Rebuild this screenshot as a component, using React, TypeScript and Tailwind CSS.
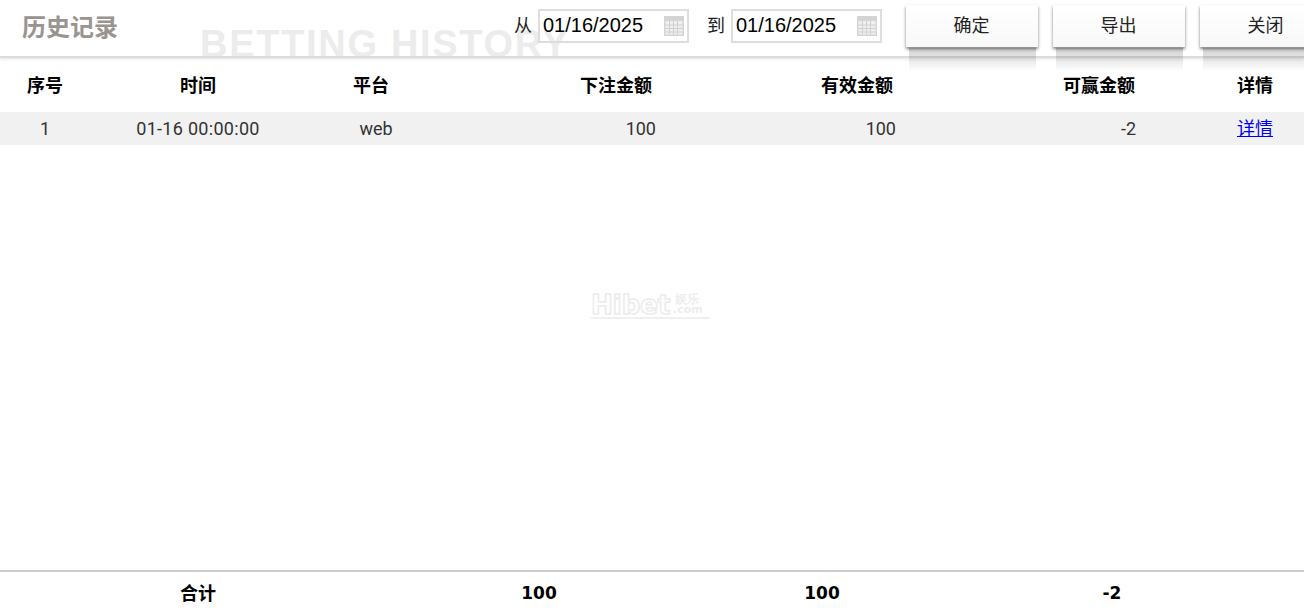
// Historial de apuestas: cabecera con filtro de fechas, tabla de una línea y fila de totales.
const CJK = 'font-["Liberation_Sans","Noto_Sans_CJK_SC",sans-serif]';
const NUM = 'font-["Roboto","Noto_Sans_CJK_SC",sans-serif]';
const ROW = 'grid grid-cols-[90px_216px_132px_218px_240px_240px_168px] items-center';

function CalendarIcon() {
  return (
    <svg width="20" height="20" viewBox="0 0 20 20" className="shrink-0">
      <rect x="0" y="0" width="20" height="20" fill="#d4d4d4" />
      <rect x="1.5" y="5" width="17" height="13.5" fill="#efefef" />
      <path d="M1.5 9h17M1.5 12.5h17M1.5 16h17M5.5 5v13.5M9.5 5v13.5M13.5 5v13.5" stroke="#d0d0d0" strokeWidth="1" fill="none" />
    </svg>
  );
}

function DateField({ value }: { value: string }) {
  return (
    <div className="flex h-[34px] w-[151px] shrink-0 items-center border-2 border-[#dedede] pl-[3px]">
      <input
        readOnly
        value={value}
        className="-mt-[2px] w-[121px] bg-transparent text-[20px] text-black outline-none"
      />
      <CalendarIcon />
    </div>
  );
}

function ActionButton({ label }: { label: string }) {
  return (
    <div className="relative h-[42px] w-[132px] shrink-0">
      <button className="h-full w-full bg-gradient-to-b from-white to-[#f8f8f8] pr-[1px] text-[18px] text-[#222] shadow-[0_2px_3px_rgba(0,0,0,0.5)]">
        {label}
      </button>
      <div className="absolute top-[43px] left-[3px] h-[23px] w-[127px] bg-gradient-to-b from-[rgba(0,0,0,0.18)] to-transparent" />
    </div>
  );
}

export default function App() {
  return (
    <div className={`flex h-[615px] flex-col overflow-hidden bg-white ${CJK}`}>
      <header className="relative flex h-[58px] shrink-0 border-b-2 border-[#dcdcdc] shadow-[0_1px_3px_rgba(0,0,0,0.12)]">
        <span className="absolute top-[25px] left-[200px] h-[31px] overflow-hidden text-[38px] leading-[38px] font-bold tracking-[1.7px] whitespace-nowrap text-[#ececec]">
          BETTING HISTORY
        </span>
        <h1 className="relative mt-[12px] ml-[22px] w-[96px] shrink-0 text-[24px] leading-[32px] font-bold whitespace-nowrap text-[#999490]">
          历史记录
        </h1>
        <div className="relative mt-[5px] ml-[396px] flex shrink-0 items-start">
          <div className="mt-[4px] flex items-center">
            <span className="w-[24px] text-[18px] text-[#222]">从</span>
            <DateField value="01/16/2025" />
            <span className="ml-[18px] w-[24px] text-[18px] text-[#222]">到</span>
            <DateField value="01/16/2025" />
          </div>
          <div className="ml-[24px] flex gap-[15px]">
            <ActionButton label="确定" />
            <ActionButton label="导出" />
            <ActionButton label="关闭" />
          </div>
        </div>
      </header>

      <main className="relative flex-1">
        <div className={`${ROW} h-[54px] pt-[2px] text-[18px] font-bold text-black`}>
          <span className="text-center">序号</span>
          <span className="text-center">时间</span>
          <span className="pr-[2px] text-center">平台</span>
          <span className="pr-[4px] text-right">下注金额</span>
          <span className="pr-[3px] text-right">有效金额</span>
          <span className="pr-[1px] text-right">可赢金额</span>
          <span className="pl-[70px] text-center">详情</span>
        </div>
        <div className={`${ROW} h-[33px] bg-[#f1f1f1] text-[18px] text-[#333] ${NUM}`}>
          <span className="text-center">1</span>
          <span className="text-center tracking-[0.3px]">01-16 00:00:00</span>
          <span className="pl-[8px] text-center">web</span>
          <span className="text-right">100</span>
          <span className="text-right">100</span>
          <span className="text-right">-2</span>
          <a href="#" className="pl-[70px] text-center text-[18px] text-[#0000ee] underline">
            详情
          </a>
        </div>

        <div className="pointer-events-none absolute top-[235px] left-[591px] h-[26px] w-[119px] border-b-2 border-[#f0f0f0] font-['DejaVu_Sans']">
          <span className="block w-fit text-[26px] leading-[25px] font-bold text-white [-webkit-text-stroke:1.5px_#ececec]">
            Hibet
          </span>
          <span className="absolute top-0 left-[84px] text-[12px] leading-[12px] font-bold whitespace-nowrap text-[#ededed]">
            娱乐
          </span>
          <span className="absolute top-[11px] left-[82px] text-[11px] leading-[12px] font-bold text-[#ededed]">
            .com
          </span>
        </div>
      </main>

      <footer className="flex h-[45px] shrink-0 items-center border-t-2 border-[#cccccc] font-['DejaVu_Sans','Noto_Sans_CJK_SC',sans-serif] text-[17px] font-bold text-black">
        <span className="w-[396px] text-center text-[18px]">合计</span>
        <span className="w-[286px] text-center">100</span>
        <span className="w-[280px] text-center">100</span>
        <span className="w-[300px] text-center">-2</span>
      </footer>
    </div>
  );
}
